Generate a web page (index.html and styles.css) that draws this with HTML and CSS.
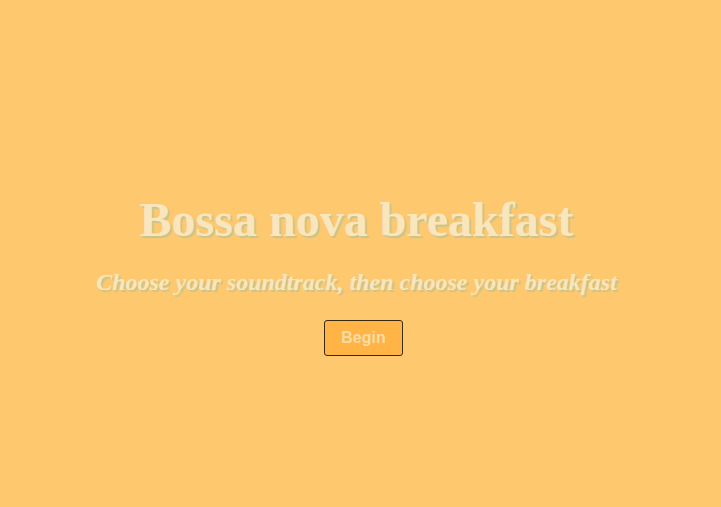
FILE: index.html
```html
<!DOCTYPE html>
<html>
<head>
<meta charset="utf-8">
<link rel="stylesheet" href="styles.css">
</head>
<body>
<main class="intro">
  <h1 class="title">Bossa nova breakfast</h1>
  <h2 class="subtitle">Choose your soundtrack, then choose your breakfast</h2>
  <button class="begin">Begin</button>
</main>
</body>
</html>
```
FILE: styles.css
```css
html, body {
  margin: 0;
  height: 100%;
}
body {
  background: #fec86f;
  font-family: "Liberation Serif", serif;
}
.intro {
  box-sizing: border-box;
  height: 100%;
  padding-top: 40px;
  display: flex;
  flex-direction: column;
  align-items: center;
  justify-content: center;
}
.title {
  margin: 0 8px 0 0;
  font-size: 48px;
  font-weight: bold;
  color: #f9e6bd;
  text-shadow: 2px 2px 1px #c9c48a;
}
.subtitle {
  margin: 22px 8px 0 0;
  font-size: 24px;
  font-style: italic;
  font-weight: bold;
  color: #f9e6bd;
  text-shadow: 2px 2px 1px #c9c48a;
}
.begin {
  margin: 24px 0 0 6px;
  width: 79px;
  height: 36px;
  background: #ffb445;
  border: 1px solid #3a2a12;
  border-radius: 3px;
  color: #f9dca3;
  font-family: "Liberation Sans", sans-serif;
  font-weight: bold;
  font-size: 16px;
}
```
